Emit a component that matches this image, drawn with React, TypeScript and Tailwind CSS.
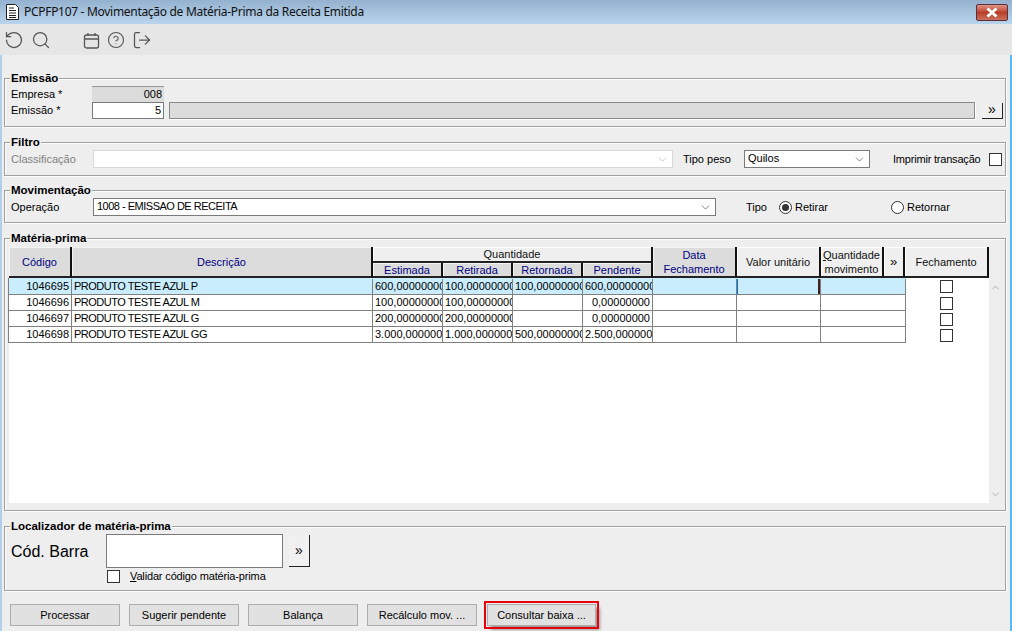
import { ChevronDown, ChevronUp, CircleHelp, LogOut, RotateCcw, Search } from "lucide-react";
import type { ReactNode } from "react";

// Column tracks: header has the » column apart, rows merge it into the last data cell
const headCols = "grid grid-cols-[63px_301px_70px_70px_70px_70px_84px_84px_63px_21px_84px]";
const rowCols = "grid grid-cols-[63px_301px_70px_70px_70px_70px_84px_84px_85px]";

const rows = [
  { code: "1046695", desc: "PRODUTO TESTE AZUL P", est: "600,00000000", ret: "100,00000000", back: "100,00000000", pend: "600,00000000" },
  { code: "1046696", desc: "PRODUTO TESTE AZUL M", est: "100,00000000", ret: "100,00000000", back: "", pend: "0,00000000" },
  { code: "1046697", desc: "PRODUTO TESTE AZUL G", est: "200,00000000", ret: "200,00000000", back: "", pend: "0,00000000" },
  { code: "1046698", desc: "PRODUTO TESTE AZUL GG", est: "3.000,000000", ret: "1.000,000000", back: "500,00000000", pend: "2.500,000000" },
];

function Group({ title, className, children }: { title: string; className: string; children: ReactNode }) {
  return (
    <fieldset className={`mr-[2px] min-w-0 border border-[#a0a0a0] pl-[6px] pr-[2px] shadow-[inset_1px_1px_0_#fff,1px_1px_0_#fff] ${className}`}>
      <legend className="relative -ml-[1px] bg-[#eeeeee] px-[1px] text-[11.5px] leading-[13px] font-bold text-black">{title}</legend>
      {children}
    </fieldset>
  );
}

function Combo({ value, className, muted }: { value?: ReactNode; className: string; muted?: boolean }) {
  return (
    <div className={`flex h-[18px] items-center justify-between bg-white pl-[3px] pr-[3px] border ${muted ? "border-[#d9d9d9]" : "border-[#7a7a7a]"} ${className}`}>
      <span className="pb-[2px] text-[11px]">{value}</span>
      <ChevronDown size={13} strokeWidth={1.2} className={muted ? "text-[#b5b5b5]" : "text-[#444]"} />
    </div>
  );
}

function Check({ className = "" }: { className?: string }) {
  return <div className={`h-[13px] w-[13px] border border-[#333] bg-white ${className}`} />;
}

function Radio({ on }: { on?: boolean }) {
  return (
    <div className="flex h-[13px] w-[13px] items-center justify-center rounded-full border border-[#333] bg-white">
      {on && <div className="h-[7px] w-[7px] rounded-full bg-[#333]" />}
    </div>
  );
}

function MoreButton({ className }: { className: string }) {
  return (
    <button className={`flex items-center justify-center bg-[#f0f0f0] border-r border-b border-r-[#222] border-b-[#222] text-[14px] leading-none pb-[2px] ${className}`}>
      »
    </button>
  );
}

function HeadCell({ children, className }: { children: ReactNode; className: string }) {
  return (
    <div className={`flex items-center justify-center text-center text-[11px] leading-[14px] border-r-2 border-b-2 border-r-[#111] border-b-[#222] ${className}`}>
      {children}
    </div>
  );
}

function Cell({ children, right, className = "" }: { children?: ReactNode; right?: boolean; className?: string }) {
  return (
    <div className={`overflow-hidden whitespace-nowrap px-[2px] text-[11px] leading-[15px] border-r border-b border-[#808080] ${right ? "text-right" : "text-left"} ${className}`}>
      {children}
    </div>
  );
}

const darkHead = "bg-[#dcdcdc] text-[#000080] shadow-[inset_1px_1px_0_#f4f4f4]";
const lightHead = "bg-[#efefef] text-[#111] shadow-[inset_1px_1px_0_#fff]";

export default function App() {
  const actions = ["Processar", "Sugerir pendente", "Balança", "Recálculo mov. ..."];

  return (
    <div className="h-[631px] w-[1012px] overflow-hidden bg-[#eeeeee] text-[11px] text-black font-['Liberation_Sans',Arial,sans-serif]">
      {/* Title bar */}
      <div className="flex h-[24px] items-center justify-between bg-gradient-to-b from-[#94b2cf] to-[#b9d4ed] pl-[6px] pr-[4px]">
        <div className="flex items-center gap-[5px]">
          <svg width="13" height="16" viewBox="0 0 13 16">
            <path d="M.5.5h9l3 3v12H.5z" fill="#fff" stroke="#222" />
            <path d="M3 4h5M3 6.500h7M3 9h7M3 11.500h7M3 13.500h7" stroke="#222" />
          </svg>
          <span className="text-[12px] tracking-[-0.3px] text-[#111] font-['Noto_Sans',sans-serif]">PCPFP107 - Movimentação de Matéria-Prima da Receita Emitida</span>
        </div>
        <div className="flex h-[17px] w-[32px] items-center justify-center rounded-[2px] border border-[#5a3040] bg-gradient-to-b from-[#e09484] via-[#b93e28] to-[#c9705a]">
          <svg width="14" height="11" viewBox="0 0 14 11">
            <path d="M2.500 1.500l9 8M11.500 1.500l-9 8" stroke="#fff" strokeWidth="3" />
          </svg>
        </div>
      </div>

      {/* Toolbar */}
      <div className="flex h-[31px] items-center bg-[#e6e6e6] pl-[4px] pt-[1px] text-[#555]">
        <RotateCcw size={20} strokeWidth={1.5} />
        <Search size={20} strokeWidth={1.5} className="ml-[7px]" />
        <svg width="17" height="17" viewBox="0 0 17 17" fill="none" stroke="currentColor" strokeWidth="1.300" className="ml-[32px]">
          <rect x="1.500" y="3" width="14" height="13" rx="2" />
          <path d="M1.500 7h14M5 1v3M12 1v3" />
        </svg>
        <CircleHelp size={18} strokeWidth={1.5} className="ml-[7px]" />
        <LogOut size={20} strokeWidth={1.5} className="ml-[7px]" />
      </div>

      {/* Form body */}
      <div className="flex h-[576px] flex-col border-x-2 border-l-[#b4cfe9] border-r-[#5ab8ee] px-[2px] pt-[17px]">
        <Group title="Emissão" className="h-[55px]">
          <div className="mt-[1px] flex h-[16px] items-center">
            <span className="w-[81px]">Empresa *</span>
            <div className="flex h-[16px] w-[72px] items-center justify-end border-t border-[#999] bg-[#dcdcdc] pr-[2px]">008</div>
          </div>
          <div className="flex h-[17px] items-center">
            <span className="w-[81px]">Emissão *</span>
            <div className="flex h-[17px] w-[72px] items-center justify-end border border-[#7a7a7a] bg-white pr-[2px]">5</div>
            <div className="ml-[5px] h-[17px] w-[806px] border border-[#8a8a8a] bg-[#dcdcdc] shadow-[1px_1px_0_#fff]" />
            <MoreButton className="ml-[7px] h-[16px] w-[21px]" />
          </div>
        </Group>

        <Group title="Filtro" className="mt-[9px] h-[40px]">
          <div className="mt-[1px] flex items-center">
            <span className="w-[82px] text-[#808080]">Classificação</span>
            <Combo className="w-[580px]" muted />
            <span className="ml-[10px] w-[61px]">Tipo peso</span>
            <Combo className="w-[126px]" value="Quilos" />
            <span className="ml-[23px] w-[96px] tracking-[-0.2px]">Imprimir transação</span>
            <Check />
          </div>
        </Group>

        <Group title="Movimentação" className="mt-[8px] h-[39px]">
          <div className="mt-[1px] flex items-center">
            <span className="w-[82px]">Operação</span>
            <Combo className="w-[623px]" value={<span className="tracking-[-0.5px]">1008 - EMISSAO DE RECEITA</span>} />
            <span className="ml-[30px] w-[33px]">Tipo</span>
            <Radio on />
            <span className="ml-[3px] w-[96px]">Retirar</span>
            <Radio />
            <span className="ml-[3px]">Retornar</span>
          </div>
        </Group>

        <Group title="Matéria-prima" className="mt-[9px] h-[279px]">
          <div className="-ml-[2px] mt-[2px] flex">
            <div className="h-[256px] w-[980px] bg-white">
              {/* Grid header */}
              <div className={`${headCols} grid-rows-[16px_15px]`}>
                <HeadCell className={`row-span-2 ${darkHead}`}>Código</HeadCell>
                <HeadCell className={`row-span-2 ${darkHead}`}>Descrição</HeadCell>
                <HeadCell className={`col-span-4 ${lightHead}`}>Quantidade</HeadCell>
                <HeadCell className={`row-span-2 ${darkHead} col-start-7 row-start-1`}>Data<br />Fechamento</HeadCell>
                <HeadCell className={`row-span-2 ${lightHead} col-start-8 row-start-1`}>Valor unitário</HeadCell>
                <HeadCell className={`row-span-2 ${lightHead} col-start-9 row-start-1`}>
                  <span><u>Q</u>uantidade<br />movimento</span>
                </HeadCell>
                <HeadCell className={`row-span-2 ${lightHead} col-start-10 row-start-1 text-[13px]`}>»</HeadCell>
                <HeadCell className={`row-span-2 ${lightHead} col-start-11 row-start-1`}>Fechamento</HeadCell>
                <HeadCell className={`col-start-3 row-start-2 ${darkHead}`}>Estimada</HeadCell>
                <HeadCell className={`col-start-4 row-start-2 ${darkHead}`}>Retirada</HeadCell>
                <HeadCell className={`col-start-5 row-start-2 ${darkHead}`}>Retornada</HeadCell>
                <HeadCell className={`col-start-6 row-start-2 ${darkHead}`}>Pendente</HeadCell>
              </div>

              {/* Grid rows */}
              {rows.map((row, i) => (
                <div key={row.code} className={`flex ${i === 0 ? "h-[17px]" : "h-[16px]"}`}>
                  <div className={`-ml-[1px] w-[898px] ${rowCols} border-l border-[#808080] ${i === 0 ? "bg-[#c9edfd] pt-[1px]" : ""}`}>
                    <Cell right>{row.code}</Cell>
                    <Cell className="tracking-[-0.5px]">{row.desc}</Cell>
                    <Cell>{row.est}</Cell>
                    <Cell>{row.ret}</Cell>
                    <Cell>{row.back}</Cell>
                    <Cell right={row.pend === "0,00000000"}>{row.pend}</Cell>
                    <Cell />
                    <Cell className={i === 0 ? "border-l border-l-[#0078d7] shadow-[inset_-2px_0_0_#402020]" : ""} />
                    <Cell />
                  </div>
                  <div className="flex w-[83px] items-center justify-center pr-[2px]">
                    <Check />
                  </div>
                </div>
              ))}
            </div>

            {/* Scrollbar */}
            <div className="flex w-[13px] flex-col items-center justify-between pt-[35px] pb-[3px] text-[#c4c4c4]">
              <ChevronUp size={11} strokeWidth={2.5} />
              <ChevronDown size={11} strokeWidth={2.5} />
            </div>
          </div>
        </Group>

        <Group title="Localizador de matéria-prima" className="mt-[9px] h-[71px]">
          <div className="flex items-start">
            <span className="mt-[9px] w-[95px] text-[16px] leading-[20px]">Cód. Barra</span>
            <div className="mt-[1px] h-[34px] w-[177px] border border-[#7a7a7a] bg-white" />
            <MoreButton className="ml-[6px] mt-[2px] h-[32px] w-[21px]" />
          </div>
          <div className="ml-[96px] flex items-center">
            <Check />
            <span className="ml-[10px] tracking-[-0.15px]"><u>V</u>alidar código matéria-prima</span>
          </div>
        </Group>

        {/* Action buttons */}
        <div className="mt-[13px] flex gap-[9px] pl-[6px]">
          {actions.map((label) => (
            <button key={label} className="h-[22px] w-[110px] border border-[#adadad] bg-[#e1e1e1] text-[11px]">
              {label}
            </button>
          ))}
          <button className="ml-[1px] h-[22px] w-[109px] border border-[#adadad] bg-[#e1e1e1] text-[11px] outline-2 outline-offset-1 outline-[#e8000c] shadow-[4px_4px_3px_#9a9a9a]">
            Consultar baixa ...
          </button>
        </div>
      </div>
    </div>
  );
}
